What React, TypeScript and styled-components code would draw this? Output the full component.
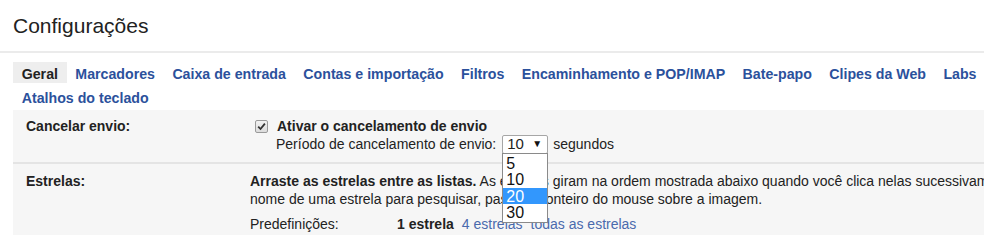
import React from "react";
import styled, { createGlobalStyle } from "styled-components";

const Global = createGlobalStyle`
  html, body { margin: 0; padding: 0; background: #fff; overflow: hidden; }
  body {
    font-family: "Liberation Sans", Arial, Helvetica, sans-serif;
    color: #222;
    -webkit-font-smoothing: antialiased;
  }
`;

const Page = styled.div`
  width: 984px;
  height: 235px;
  overflow: hidden;
  position: relative;
`;

const Header = styled.header`
  height: 51px;
  border-bottom: 2px solid #ebebeb;
  padding-left: 13px;
`;

const Title = styled.h1`
  margin: 0;
  padding-top: 14px;
  font-size: 21px;
  line-height: 24px;
  font-weight: normal;
  color: #222;
`;

const Tabs = styled.nav`
  display: flex;
  flex-direction: column;
  row-gap: 3px;
  padding: 9px 0 0 13px;
`;

const TabRow = styled.div`
  display: flex;
  white-space: nowrap;
`;

const Tab = styled.a<{ $active?: boolean }>`
  display: block;
  height: 21px;
  line-height: 25px;
  padding: 0 8.7px;
  font-size: 14.2px;
  font-weight: bold;
  white-space: nowrap;
  text-decoration: none;
  color: ${(p) => (p.$active ? "#222" : "#2b519c")};
  background: ${(p) => (p.$active ? "#eeeeee" : "transparent")};
  cursor: pointer;
`;

const Settings = styled.div`
  margin: 3px 0 0 13px;
  background: #f6f6f6;
`;

const Row = styled.section<{ $pt: number; $pb: number; $sep?: boolean }>`
  display: grid;
  grid-template-columns: 237px 1fr;
  padding: ${(p) => p.$pt}px 0 ${(p) => p.$pb}px;
  border-bottom: ${(p) => (p.$sep ? "2px solid #e4e4e4" : "none")};
`;

const Label = styled.div`
  padding-left: 13px;
  font-size: 14px;
  line-height: 18px;
  font-weight: bold;
`;

const Value = styled.div`
  font-size: 14px;
  line-height: 18px;
  min-width: 0;
`;

const CheckLine = styled.label`
  display: flex;
  align-items: center;
  height: 18px;
  font-weight: bold;
`;

const CheckBox = styled.span`
  display: inline-flex;
  align-items: center;
  justify-content: center;
  width: 11px;
  height: 11px;
  margin: 0 9px 0 5px;
  border: 1px solid #9a9a9a;
  border-radius: 2px;
  background: linear-gradient(#f2f2f2, #dcdcdc);
`;

const SubLine = styled.div`
  display: flex;
  align-items: center;
  height: 18px;
  padding-left: 26px;
  white-space: nowrap;
`;

const SelectWrap = styled.div`
  position: relative;
  margin: 0 5px 0 6px;
`;

const SelectBox = styled.div`
  box-sizing: border-box;
  width: 46px;
  height: 19px;
  border: 1px solid #a6a6a6;
  border-radius: 2px;
  background: #fff;
  display: flex;
  align-items: center;
  justify-content: space-between;
  padding: 0 5px 0 4px;
  font-size: 15px;
`;

const Arrow = styled.span`
  font-size: 10px;
  line-height: 1;
  color: #111;
`;

const DropList = styled.ul`
  position: absolute;
  top: 18px;
  left: 0;
  z-index: 5;
  box-sizing: border-box;
  width: 46px;
  margin: 0;
  padding: 1px 0 1px;
  list-style: none;
  background: #fff;
  border: 1px solid #8a8a8a;
`;

const DropItem = styled.li<{ $selected?: boolean }>`
  height: 16.5px;
  line-height: 17px;
  padding-left: 3px;
  font-size: 16px;
  color: ${(p) => (p.$selected ? "#fff" : "#111")};
  background: ${(p) => (p.$selected ? "#3297fd" : "transparent")};
`;

const DescLine = styled.div`
  white-space: nowrap;
  overflow: hidden;
  height: 18px;
`;

const Strong = styled.b`
  font-weight: bold;
`;

const Presets = styled.div`
  display: flex;
  align-items: center;
  margin-top: 7px;
  height: 18px;
  white-space: nowrap;
`;

const PresetLabel = styled.span`
  width: 147px;
`;

const PresetItem = styled.a<{ $current?: boolean }>`
  margin-right: 8px;
  text-decoration: none;
  font-weight: ${(p) => (p.$current ? "bold" : "normal")};
  color: ${(p) => (p.$current ? "#222" : "#4a6aad")};
`;

const tabs = [
  "Marcadores",
  "Caixa de entrada",
  "Contas e importação",
  "Filtros",
  "Encaminhamento e POP/IMAP",
  "Bate-papo",
  "Clipes da Web",
  "Labs",
];

export default function App() {
  return (
    <Page>
      <Global />
      <Header>
        <Title>Configurações</Title>
      </Header>
      <Tabs>
        <TabRow>
          <Tab $active>Geral</Tab>
          {tabs.map((t) => (
            <Tab key={t}>{t}</Tab>
          ))}
        </TabRow>
        <TabRow>
          <Tab>Atalhos do teclado</Tab>
        </TabRow>
      </Tabs>
      <Settings>
        <Row $pt={7} $pb={9} $sep>
          <Label>Cancelar envio:</Label>
          <Value>
            <CheckLine>
              <CheckBox>
                <svg width="9" height="9" viewBox="0 0 9 9">
                  <path d="M1.2 4.6 L3.5 7 L7.9 1.6" fill="none" stroke="#333" strokeWidth="1.8" />
                </svg>
              </CheckBox>
              Ativar o cancelamento de envio
            </CheckLine>
            <SubLine>
              Período de cancelamento de envio:
              <SelectWrap>
                <SelectBox>
                  10 <Arrow>▼</Arrow>
                </SelectBox>
                <DropList>
                  <DropItem>5</DropItem>
                  <DropItem>10</DropItem>
                  <DropItem $selected>20</DropItem>
                  <DropItem>30</DropItem>
                </DropList>
              </SelectWrap>
              segundos
            </SubLine>
          </Value>
        </Row>
        <Row $pt={8} $pb={10}>
          <Label>Estrelas:</Label>
          <Value>
            <DescLine>
              <Strong>Arraste as estrelas entre as listas.</Strong> As estrelas giram na ordem
              mostrada abaixo quando você clica nelas sucessivamente. Para saber o
            </DescLine>
            <DescLine>
              nome de uma estrela para pesquisar, passe o ponteiro do mouse sobre a imagem.
            </DescLine>
            <Presets>
              <PresetLabel>Predefinições:</PresetLabel>
              <PresetItem $current>1 estrela</PresetItem>
              <PresetItem>4 estrelas</PresetItem>
              <PresetItem>todas as estrelas</PresetItem>
            </Presets>
          </Value>
        </Row>
      </Settings>
    </Page>
  );
}
